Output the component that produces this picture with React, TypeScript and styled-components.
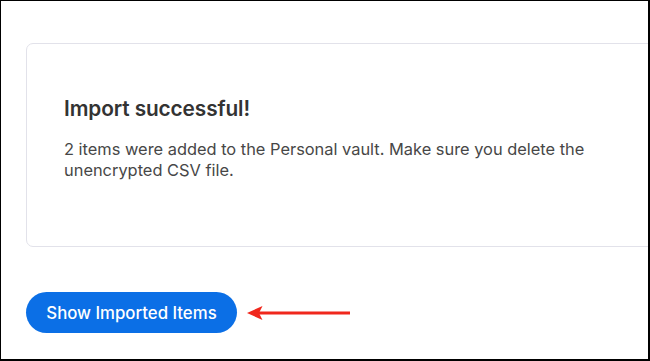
import React from "react";
import styled, { createGlobalStyle } from "styled-components";

const Global = createGlobalStyle`
  html, body { margin: 0; padding: 0; background: #ffffff; }
  * { box-sizing: border-box; }
`;

const Frame = styled.div`
  width: 650px;
  height: 361px;
  border-style: solid;
  border-color: #000;
  border-width: 1px 2px 2px 1px;
  background: #fff;
  overflow: hidden;
  padding: 42px 0 0 25px;
  font-family: Inter, "Liberation Sans", Arial, sans-serif;
  display: flex;
  flex-direction: column;
`;

const Card = styled.section`
  margin-right: -30px;
  height: 204px;
  flex: none;
  border: 1px solid #e2e2ea;
  border-radius: 7px;
  padding: 53px 0 0 37px;
`;

const Title = styled.h2`
  margin: 0;
  font-size: 20.8px;
  line-height: 24px;
  font-weight: 600;
  color: #333333;
  letter-spacing: -0.1px;
`;

const Body = styled.p`
  margin: 18px 0 0;
  font-size: 16.4px;
  line-height: 20.5px;
  color: #474747;
  max-width: 545px;
`;

const ActionRow = styled.div`
  margin-top: 45px;
  display: flex;
  align-items: center;
  gap: 10px;
`;

const PrimaryButton = styled.button`
  width: 211px;
  height: 41px;
  flex: none;
  border: none;
  border-radius: 21px;
  background: #0b6fe6;
  color: #fff;
  font-family: inherit;
  font-size: 16.8px;
  font-weight: 500;
  padding: 0;
  cursor: pointer;
`;

const Arrow = () => (
  <svg width="104" height="16" viewBox="0 0 104 16">
    <line x1="12" y1="8" x2="103" y2="8" stroke="#f0271c" strokeWidth="3" />
    <path d="M0 8 L15.5 1 L12 8 L15.5 15 Z" fill="#f0271c" />
  </svg>
);

export default function App() {
  return (
    <>
      <Global />
      <Frame>
        <Card>
          <Title>Import successful!</Title>
          <Body>
            2 items were added to the Personal vault. Make sure you delete the
            unencrypted CSV file.
          </Body>
        </Card>
        <ActionRow>
          <PrimaryButton>Show Imported Items</PrimaryButton>
          <Arrow />
        </ActionRow>
      </Frame>
    </>
  );
}
